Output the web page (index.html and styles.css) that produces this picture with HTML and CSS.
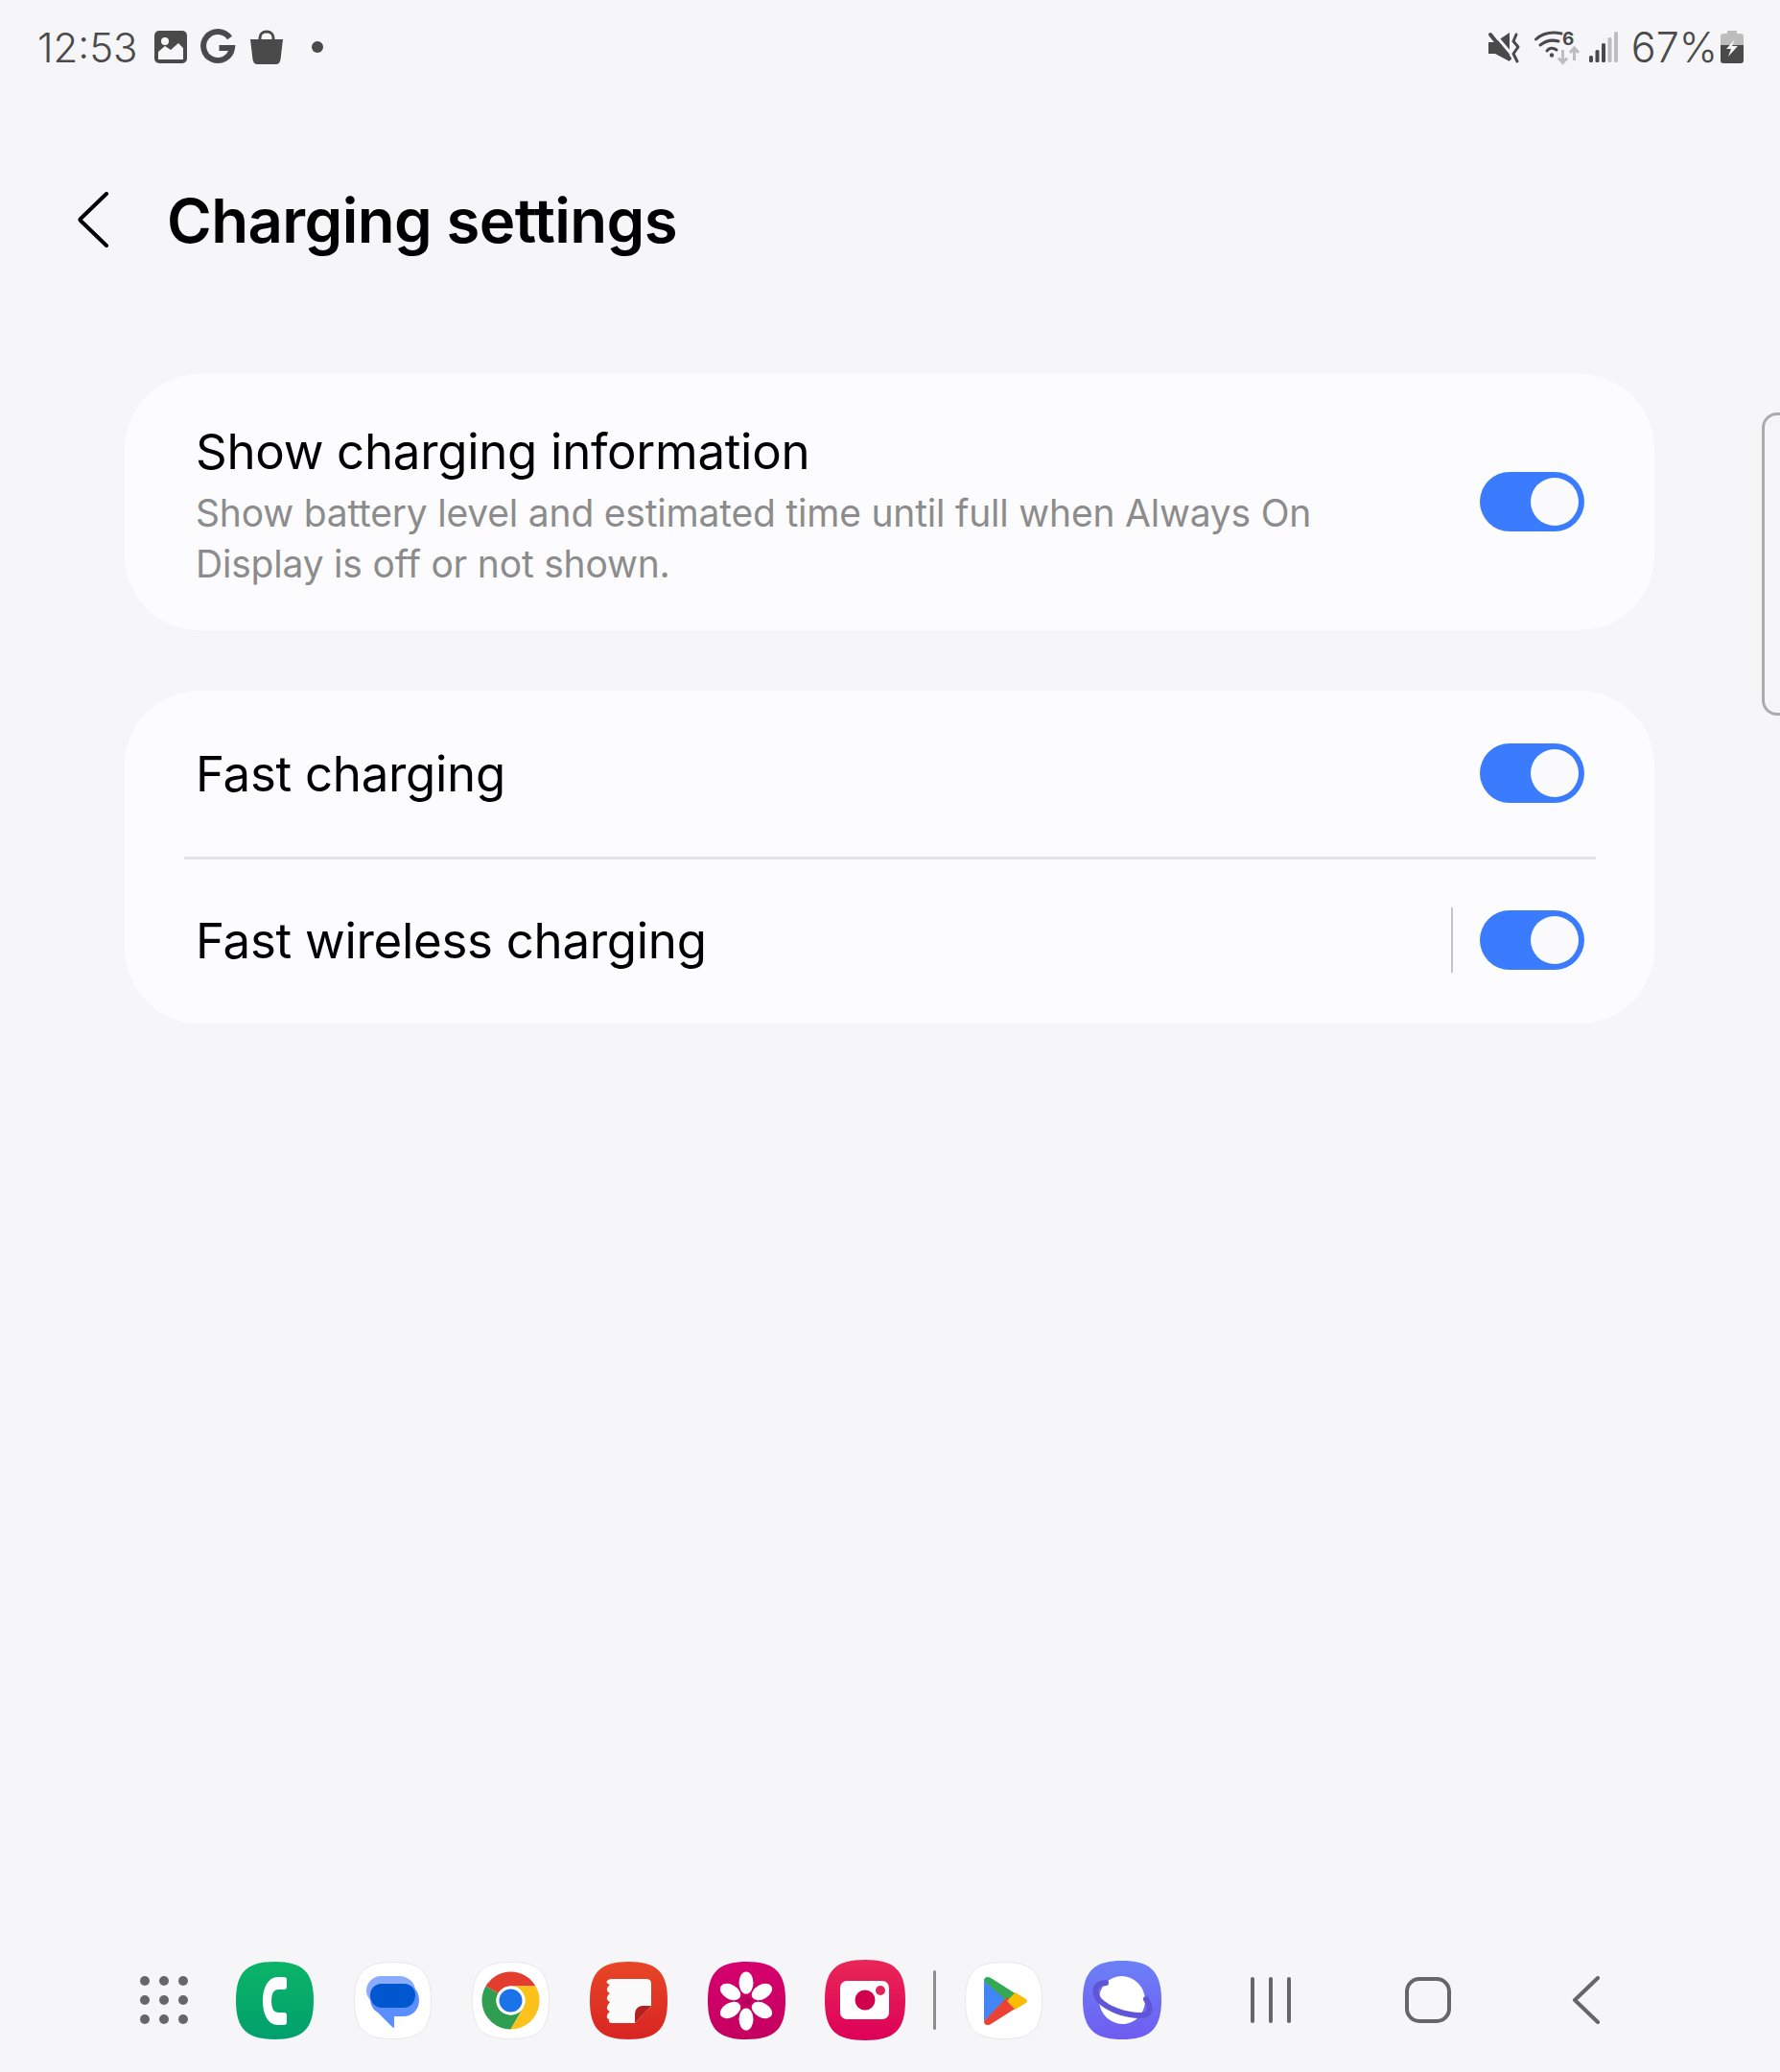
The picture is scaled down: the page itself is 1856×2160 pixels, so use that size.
FILE: index.html
```html
<!DOCTYPE html>
<html lang="en">
<head>
<meta charset="utf-8">
<title>Charging settings</title>
<link rel="stylesheet" href="styles.css">
</head>
<body>
<div class="page">
  <header class="status">
    <div class="status-left">
      <span class="clock">12:53</span>
      <svg class="ic ic-img" viewBox="0 0 34 34"><rect width="34" height="34" rx="5" fill="#4a4a4a"/><circle cx="11" cy="11" r="4" fill="#f6f6f8"/><path d="M4 30V22L11 16 17 20 25 13 30 18V30Z" fill="#f6f6f8"/></svg>
      <svg class="ic ic-g" viewBox="0 0 36 36"><path d="M29.5 8.5A15 15 0 1 0 32 19H18.5" fill="none" stroke="#4a4a4a" stroke-width="6"/></svg>
      <svg class="ic ic-bag" viewBox="0 0 36 36"><path d="M11 12V8.500C11 4.500 14 2 18 2S25 4.500 25 8.500V12" fill="none" stroke="#4a4a4a" stroke-width="3"/><path d="M1 10H35L32.500 31C32 34 30.500 36 27.500 36H8.500C5.500 36 4 34 3.500 31Z" fill="#4a4a4a"/></svg>
      <span class="dot"></span>
    </div>
    <div class="status-right">
      <svg class="ic ic-mute" viewBox="0 0 32 32"><path d="M0 11H7L22 1V31L7 23H0Z" fill="#4a4a4a"/><path d="M5 1 27 27" stroke="#f6f6f8" stroke-width="3"/><path d="M2 3 22 28" stroke="#4a4a4a" stroke-width="4" stroke-linecap="round"/><path d="M29 3 26 10 31 16 26 23 30 31" fill="none" stroke="#4a4a4a" stroke-width="3" stroke-linecap="round" stroke-linejoin="round"/></svg>
      <svg class="ic ic-wifi" viewBox="0 0 46 34"><path d="M1.500 9C7 4 16 .5 28 3" fill="none" stroke="#4a4a4a" stroke-width="3" stroke-linecap="round"/><path d="M6 15C11 11 18 9 25 11" fill="none" stroke="#4a4a4a" stroke-width="3" stroke-linecap="round"/><path d="M13 21C15 18 19 17 23 20" fill="none" stroke="#4a4a4a" stroke-width="3" stroke-linecap="round"/><circle cx="18" cy="25.500" r="2.200" fill="#4a4a4a"/><text class="wifi-six" x="29" y="15">6</text><path d="M29.500 20V33M25 28.500 29.500 33.500 34 28.500" fill="none" stroke="#bdbdbd" stroke-width="3"/><path d="M41.500 31V18M37 23 41.500 18 46 23" fill="none" stroke="#bdbdbd" stroke-width="3"/></svg>
      <svg class="ic ic-signal" viewBox="0 0 30 32"><rect x="0" y="25" width="4" height="7" rx="1.500" fill="#4a4a4a"/><rect x="6.500" y="19" width="4" height="13" rx="1.500" fill="#4a4a4a"/><rect x="13" y="12" width="4" height="20" rx="1.500" fill="#4a4a4a"/><rect x="19.500" y="6" width="4" height="26" rx="1.500" fill="#bdbdbd"/><rect x="26" y="0" width="4" height="32" rx="1.500" fill="#bdbdbd"/></svg>
      <span class="battery-pct">67%</span>
      <svg class="ic ic-batt" viewBox="0 0 24 34"><path d="M7 0H17V3H21Q24 3 24 6V15H0V6Q0 3 3 3H7Z" fill="#bdbdbd"/><path d="M0 15H24V31Q24 34 21 34H3Q0 34 0 31Z" fill="#4a4a4a"/><path d="M15 9 6 19H11L8 27 18 16H12Z" fill="#f6f6f8"/></svg>
    </div>
  </header>

  <div class="title-bar">
    <svg class="back" viewBox="0 0 34 58"><path d="M31 2 4 28 Q3 29 4 30L31 56" fill="none" stroke="#000" stroke-width="4" stroke-linecap="round"/></svg>
    <h1 class="title">Charging settings</h1>
  </div>

  <main class="content">
    <section class="card">
      <div class="row row-tall">
        <div class="row-text">
          <div class="row-title">Show charging information</div>
          <div class="row-sub">Show battery level and estimated time until full when Always On Display is off or not shown.</div>
        </div>
        <span class="toggle"></span>
      </div>
    </section>
    <section class="card">
      <div class="row row-first">
        <div class="row-title">Fast charging</div>
        <span class="toggle"></span>
      </div>
      <div class="divider"></div>
      <div class="row row-last">
        <div class="row-title">Fast wireless charging</div>
        <span class="vline"></span>
        <span class="toggle"></span>
      </div>
    </section>
  </main>

  <div class="handle"></div>

  <footer class="dock">
    <div class="grid-dots">
      <i></i><i></i><i></i><i></i><i></i><i></i><i></i><i></i><i></i>
    </div>
    <svg class="app" viewBox="0 0 81 81"><defs><linearGradient id="gGreen" x1="0" y1="0" x2="0" y2="1"><stop offset="0" stop-color="#0bb467"/><stop offset="1" stop-color="#00a06c"/></linearGradient></defs><path d="M40.500 0C70 0 81 11 81 40.500S70 81 40.500 81 0 70 0 40.500 11 0 40.500 0Z" fill="url(#gGreen)"/><path d="M44 16H50Q53 16 53 19V26Q53 29 50 29H44Q37 29 37 41T44 53H50Q53 53 53 56V63Q53 66 50 66H44C33 66 28 54 28 41S33 16 44 16Z" fill="#fff"/></svg>
    <svg class="app" viewBox="0 0 81 81"><path d="M40.500 .5C70 .5 80.500 11 80.500 40.500S70 80.500 40.500 80.500 .5 70 .5 40.500 11 .5 40.500 .5Z" fill="#fff" stroke="#e8e8ea"/><path d="M28 15H47C57 15 64 22 64 30S57 45 47 45H28C20 45 13 38 13 30S20 15 28 15Z" fill="#8aabff"/><path d="M30 23H52C61 23 68 30 68 40S61 57 52 57H42V68Q42 70 40 68L25 53C20 50 17 45 17 38 17 30 22 23 30 23Z" fill="#5b8ffd"/><path d="M29 23H52C59 23 64 28 64 35S59 48 52 48H29C22 48 17 42 17 35S22 23 29 23Z" fill="#0057d0"/></svg>
    <svg class="app" viewBox="0 0 81 81"><path d="M40.500 .5C70 .5 80.500 11 80.500 40.500S70 80.500 40.500 80.500 .5 70 .5 40.500 11 .5 40.500 .5Z" fill="#fff" stroke="#e8e8ea"/><path d="M14.500 25.500A30 30 0 0 1 66.500 25.500H40.500A15 15 0 0 0 27.500 33Z" fill="#e23d2e"/><path d="M14.500 25.500A30 30 0 0 0 40.500 70.500L53.500 48A15 15 0 0 1 27.500 33Z" fill="#2f9e50"/><path d="M66.500 25.500H40.500A15 15 0 0 1 53.500 48L40.500 70.500A30 30 0 0 0 66.500 25.500Z" fill="#fcc11a"/><circle cx="40.500" cy="40.500" r="15" fill="#fff"/><circle cx="40.500" cy="40.500" r="12" fill="#1a73e8"/></svg>
    <svg class="app" viewBox="0 0 81 81"><defs><linearGradient id="gRed" x1="0" y1="0" x2="0" y2="1"><stop offset="0" stop-color="#e84626"/><stop offset="1" stop-color="#d82423"/></linearGradient></defs><path d="M40.500 0C70 0 81 11 81 40.500S70 81 40.500 81 0 70 0 40.500 11 0 40.500 0Z" fill="url(#gRed)"/><path d="M22 18H59Q64 18 64 23V46L47 64H23Q19 64 20 60 17 59 18 56T21 52Q17 50 18 47T21 42Q17 40 18 37T21 33Q17 31 18 28T21 24Q16 22 18 20T22 18Z" fill="#fbfbfb"/><path d="M64 46H55C50 46 47 50 47 55V64Z" fill="#b32020"/></svg>
    <svg class="app" viewBox="0 0 81 81"><defs><linearGradient id="gPink" x1="0" y1="0" x2="0" y2="1"><stop offset="0" stop-color="#d6006e"/><stop offset="1" stop-color="#c4005f"/></linearGradient></defs><path d="M40.500 0C70 0 81 11 81 40.500S70 81 40.500 81 0 70 0 40.500 11 0 40.500 0Z" fill="url(#gPink)"/><g fill="#fff"><ellipse cx="40" cy="22" rx="7.500" ry="11.500"/><ellipse cx="40" cy="22" rx="7.500" ry="11.500" transform="rotate(60 40 41)"/><ellipse cx="40" cy="22" rx="7.500" ry="11.500" transform="rotate(120 40 41)"/><ellipse cx="40" cy="22" rx="7.500" ry="11.500" transform="rotate(180 40 41)"/><ellipse cx="40" cy="22" rx="7.500" ry="11.500" transform="rotate(240 40 41)"/><ellipse cx="40" cy="22" rx="7.500" ry="11.500" transform="rotate(300 40 41)"/></g><circle cx="40" cy="41" r="5.500" fill="#b8005a"/></svg>
    <svg class="app app-cam" viewBox="0 0 84 84"><defs><linearGradient id="gCam" x1="0" y1="0" x2="0" y2="1"><stop offset="0" stop-color="#e92757"/><stop offset="1" stop-color="#dd0058"/></linearGradient></defs><path d="M42 0C73 0 84 11 84 42S73 84 42 84 0 73 0 42 11 0 42 0Z" fill="url(#gCam)"/><rect x="16" y="22" width="51" height="40" rx="7" fill="#fff"/><circle cx="42" cy="42" r="10.500" fill="#d0004f"/><circle cx="58" cy="32" r="5" fill="#e0245a"/></svg>
    <span class="dock-sep"></span>
    <svg class="app app-play" viewBox="0 0 81 81"><path d="M40.500 .5C70 .5 80.500 11 80.500 40.500S70 80.500 40.500 80.500 .5 70 .5 40.500 11 .5 40.500 .5Z" fill="#fff" stroke="#e8e8ea"/><path d="M20 20Q20 16 24 16 26 16 28 17.500L54 34 44 45Z" fill="#34a853"/><path d="M20 20V62L44 41Z" fill="#4285f4"/><path d="M20 62Q20 66 24 66 26 66 28 64.500L54 48 44 37Z" fill="#ea4335"/><path d="M44 41 52.500 32 63 38.500Q67 41 63 43.500L52.500 50Z" fill="#fbbc04"/></svg>
    <svg class="app app-net" viewBox="0 0 82 82"><defs><linearGradient id="gNet" x1="0" y1="0" x2="0" y2="1"><stop offset="0" stop-color="#6c80f6"/><stop offset="1" stop-color="#6f5cf0"/></linearGradient></defs><path d="M41 0C68 0 82 9 82 41S68 82 41 82 0 73 0 41 14 0 41 0Z" fill="url(#gNet)"/><ellipse cx="41" cy="41" rx="24" ry="25" fill="#fff" transform="rotate(-12 41 41)"/><path d="M24 23C12 24 11 32 17 41 26 50 43 57 60 57 71 57 72 50 66 40" fill="none" stroke="#6055d6" stroke-width="6" stroke-linecap="round"/></svg>
    <nav class="nav">
      <svg class="nav-recent" viewBox="0 0 46 48"><path d="M4 2V46M23 2V46M42 2V46" stroke="#666" stroke-width="4" stroke-linecap="round"/></svg>
      <svg class="nav-home" viewBox="0 0 48 48"><rect x="2" y="2" width="44" height="44" rx="13" fill="none" stroke="#666" stroke-width="4"/></svg>
      <svg class="nav-back" viewBox="0 0 30 50"><path d="M27 2 3 25 27 48" fill="none" stroke="#666" stroke-width="4" stroke-linecap="round" stroke-linejoin="round"/></svg>
    </nav>
  </footer>
</div>
</body>
</html>
```
FILE: styles.css
```css
* { box-sizing: border-box; }
html, body { margin: 0; padding: 0; }
body { background: #f6f6f8; font-family: Inter, "Noto Sans", sans-serif; color: #000; }
.page { position: relative; width: 1856px; height: 2160px; display: flex; flex-direction: column; overflow: hidden; }

.status { height: 100px; display: flex; justify-content: space-between; align-items: center; padding: 0 38px 2px 39px; color: #4a4a4a; }
.status-left, .status-right { display: flex; align-items: center; }
.clock { font-size: 42px; font-weight: 300; letter-spacing: 0; width: 122px; }
.ic { display: block; flex: none; overflow: visible; }
.ic-img { width: 34px; height: 34px; }
.ic-g { width: 36px; height: 36px; margin-left: 15px; }
.ic-bag { width: 36px; height: 36px; margin-left: 14px; }
.dot { width: 12px; height: 12px; border-radius: 50%; background: #4a4a4a; margin-left: 29px; }
.ic-mute { width: 32px; height: 32px; }
.ic-wifi { width: 46px; height: 34px; margin-left: 16px; }
.wifi-six { font-family: Inter, sans-serif; font-size: 19px; font-weight: 700; fill: #4a4a4a; }
.ic-signal { width: 30px; height: 32px; margin-left: 11px; }
.battery-pct { font-size: 43px; font-weight: 300; margin-left: 14px; letter-spacing: 0; }
.ic-batt { width: 24px; height: 34px; margin-left: 3px; }

.title-bar { height: 127px; margin-top: 67px; display: flex; align-items: center; padding-left: 79px; }
.back { width: 34px; height: 58px; flex: none; margin: 0 0 3px 1px; }
.title { margin: 0 0 2px 60px; font-size: 63.5px; font-weight: 600; letter-spacing: -.6px; line-height: 1; color: #000; }

.content { padding: 96px 131px 0 130px; display: flex; flex-direction: column; gap: 63px; }
.card { background: #fcfcfe; border-radius: 78px; padding: 0 12px; }
.row { display: flex; align-items: center; padding: 0 61px 0 62px; }
.row-tall { height: 267px; padding-bottom: 2px; }
.row-first { height: 173px; padding-bottom: 2px; }
.row-last { height: 171px; padding-bottom: 3px; }
.row-text { flex: 1; width: 1180px; padding-top: 9px; }
.row-title { font-size: 51px; font-weight: 400; line-height: 60px; flex: 1; letter-spacing: -.3px; }
.row-first .row-title, .row-last .row-title { margin-top: 2px; }
.row-sub { font-size: 39px; line-height: 53px; color: #8c8c8c; width: 1200px; letter-spacing: -.2px; margin-top: 7px; }
.toggle { position: relative; display: block; width: 109px; height: 62px; border-radius: 31px; background: #3b7cff; flex: none; }
.toggle::after { content: ""; position: absolute; top: 6px; right: 6px; width: 50px; height: 50px; border-radius: 50%; background: #fbfbfe; }
.divider { height: 3px; background: #e3e3e6; margin: 0 49px 0 50px; }
.vline { width: 2px; height: 68px; background: #c4c4c6; margin-right: 28px; flex: none; }

.handle { position: absolute; left: 1837px; top: 430px; width: 40px; height: 316px; border: 3px solid #ababab; border-radius: 16px; }

.dock { margin-top: auto; height: 116px; display: flex; align-items: center; padding: 0 0 2px 146px; margin-bottom: 16px; }
.grid-dots { width: 50px; display: grid; grid-template-columns: repeat(3, 10px); gap: 10px; margin-right: 50px; }
.grid-dots i { width: 10px; height: 10px; border-radius: 50%; background: #666; display: block; }
.app { width: 81px; height: 81px; flex: none; margin-right: 42px; display: block; }
.app-cam { width: 84px; height: 84px; margin-left: -1px; margin-right: 29px; }
.dock-sep { width: 3px; height: 62px; background: #8c8c8c; border-radius: 2px; margin-right: 30px; flex: none; }
.app-net { width: 82px; height: 82px; }
.nav { display: flex; align-items: center; margin-left: 49px; }
.nav-recent { width: 46px; height: 48px; }
.nav-home { width: 48px; height: 48px; margin-left: 117px; }
.nav-back { width: 30px; height: 50px; margin-left: 126px; }
```
